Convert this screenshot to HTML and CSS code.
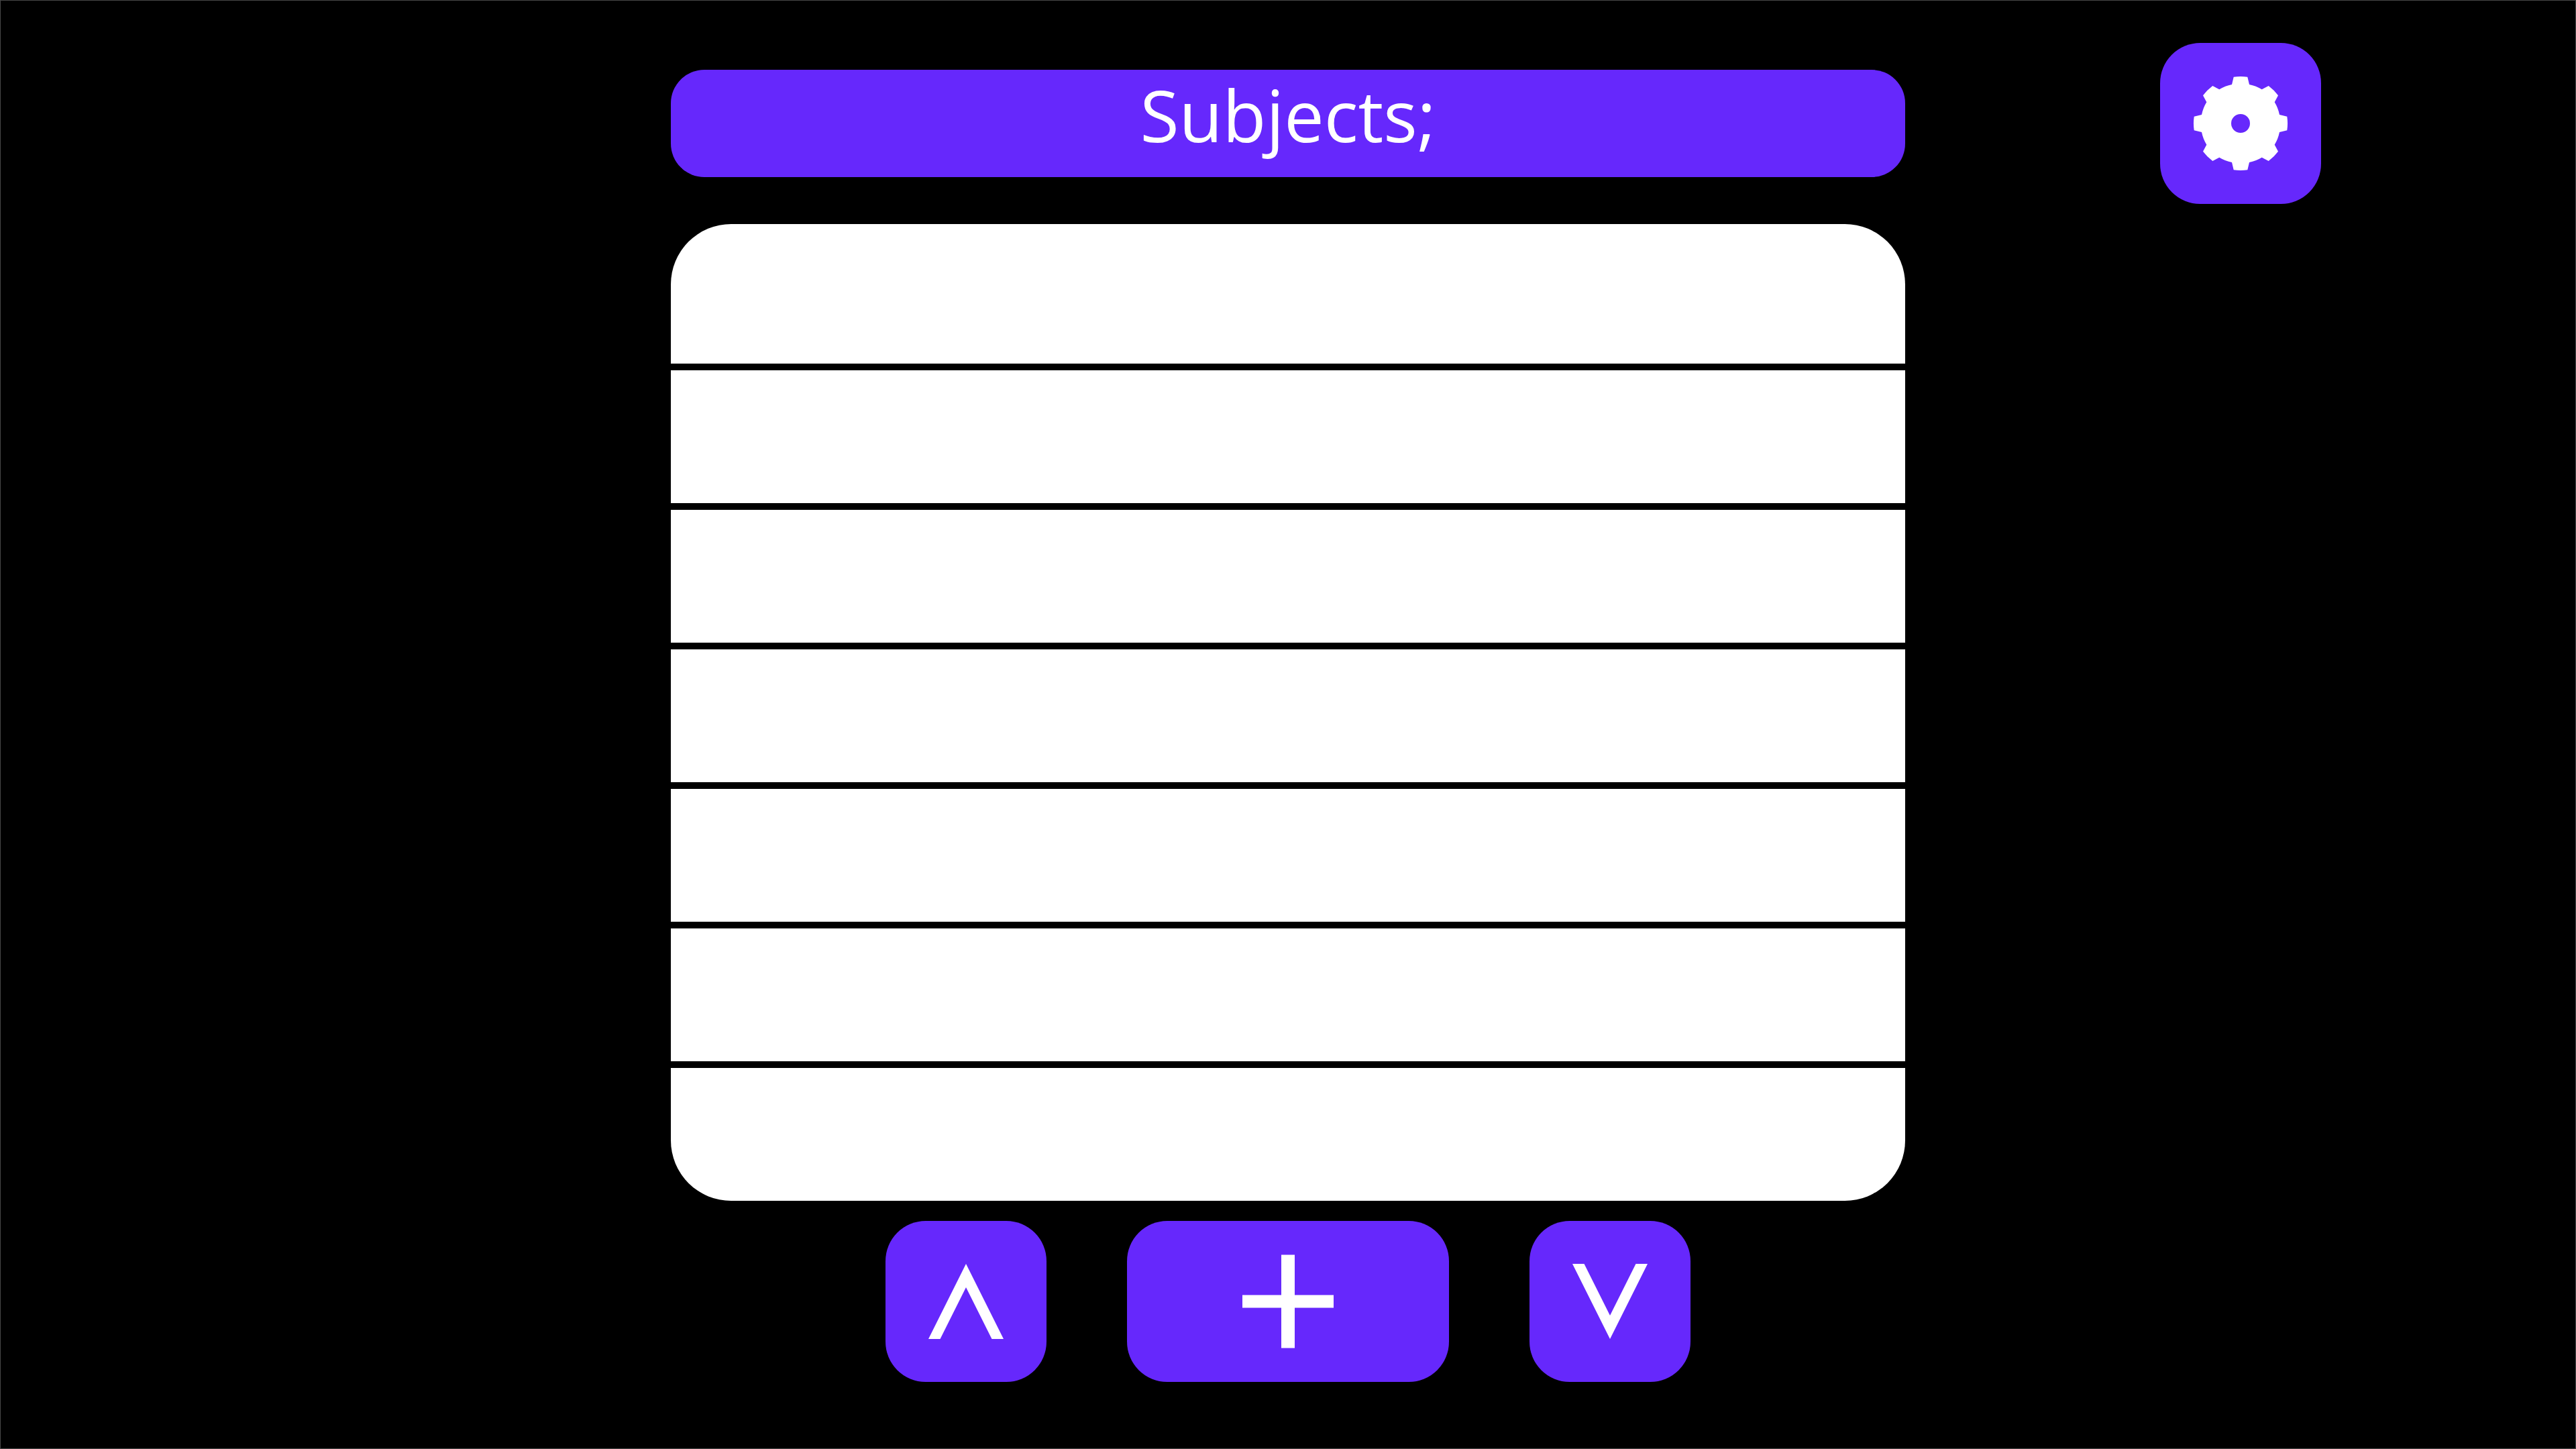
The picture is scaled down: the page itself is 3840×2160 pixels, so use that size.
FILE: index.html
```html
<!DOCTYPE html>
<html lang="en">
<head>
  <meta charset="utf-8">
  <meta name="viewport" content="width=device-width, initial-scale=1">
  <title>Subjects</title>
  <link rel="stylesheet" href="styles.css">
</head>
<body>
  <div class="page">
    <h1 class="title">Subjects;</h1>
    <button class="button settings" type="button" aria-label="Settings">
      <svg class="icon" viewBox="0 0 240 240" aria-hidden="true">
        <path fill-rule="evenodd" d="M109.700 50.700A70 70 0 0 1 130.300 50.700L133 62A59.500 59.500 0 0 1 151.700 69.300L161.700 64A70 70 0 0 1 176 78.300L170.700 88.300A59.500 59.500 0 0 1 178 107L189.300 109.700A70 70 0 0 1 189.300 130.300L178 133A59.500 59.500 0 0 1 170.700 151.700L176 161.700A70 70 0 0 1 161.700 176L151.700 170.700A59.500 59.500 0 0 1 133 178L130.300 189.300A70 70 0 0 1 109.700 189.300L107 178A59.500 59.500 0 0 1 88.300 170.700L78.300 176A70 70 0 0 1 64 161.700L69.300 151.700A59.500 59.500 0 0 1 62 133L50.700 130.300A70 70 0 0 1 50.700 109.700L62 107A59.500 59.500 0 0 1 69.300 88.300L64 78.300A70 70 0 0 1 78.300 64L88.300 69.300A59.500 59.500 0 0 1 107 62ZM120 106a14 14 0 1 0 0 28a14 14 0 1 0 0-28Z"/>
      </svg>
    </button>
    <ul class="list">
      <li class="row"></li>
      <li class="row"></li>
      <li class="row"></li>
      <li class="row"></li>
      <li class="row"></li>
      <li class="row"></li>
      <li class="row"></li>
    </ul>
    <div class="actions">
      <button class="button" type="button" aria-label="Scroll up">
        <svg class="icon" viewBox="0 0 240 240" aria-hidden="true">
          <path d="M120 64L176 176H158.500L120 99L81.500 176H64Z"/>
        </svg>
      </button>
      <button class="button button-wide" type="button" aria-label="Add subject">
        <svg class="icon" viewBox="0 0 240 240" aria-hidden="true">
          <path d="M110 50.400H130V110.400H188V129.600H130V189.600H110V129.600H52V110.400H110Z"/>
        </svg>
      </button>
      <button class="button" type="button" aria-label="Scroll down">
        <svg class="icon" viewBox="0 0 240 240" aria-hidden="true">
          <path d="M120 176L64 64H81.500L120 141L158.500 64H176Z"/>
        </svg>
      </button>
    </div>
  </div>
</body>
</html>
```
FILE: styles.css
```css
* {
  box-sizing: border-box;
}

body {
  margin: 0;
  background: #000;
  color: #fff;
  font-family: "Open Sans", "Noto Sans", sans-serif;
}

.page {
  display: grid;
  grid-template-columns: 25fr 46fr 25fr;
  grid-template-rows: auto 1fr auto;
  row-gap: 30px;
  min-height: 100vh;
  padding: 64px 0 100px;
  box-shadow: inset 0 0 0 1px #474747;
}

.title {
  grid-column: 2;
  align-self: center;
  margin: 0;
  padding-bottom: 26px;
  border-radius: 50px;
  background: #6628fc;
  font-size: 106px;
  font-weight: 400;
  line-height: 134px;
  text-align: center;
}

.button {
  width: 240px;
  height: 240px;
  padding: 0;
  border: 0;
  border-radius: 60px;
  background: #6628fc;
  color: inherit;
  cursor: pointer;
}

.button-wide {
  width: 480px;
}

.settings {
  grid-column: 3;
  justify-self: center;
}

.icon {
  display: block;
  width: 240px;
  height: 240px;
  margin: 0 auto;
  fill: currentColor;
}

.list {
  grid-column: 2;
  display: grid;
  grid-auto-rows: 1fr;
  margin: 0;
  padding: 0;
  border-radius: 90px;
  background: #fff;
  list-style: none;
  overflow: hidden;
}

.row + .row {
  border-top: 10px solid #000;
}

.actions {
  grid-column: 2;
  display: flex;
  justify-content: center;
  gap: 120px;
}
```
